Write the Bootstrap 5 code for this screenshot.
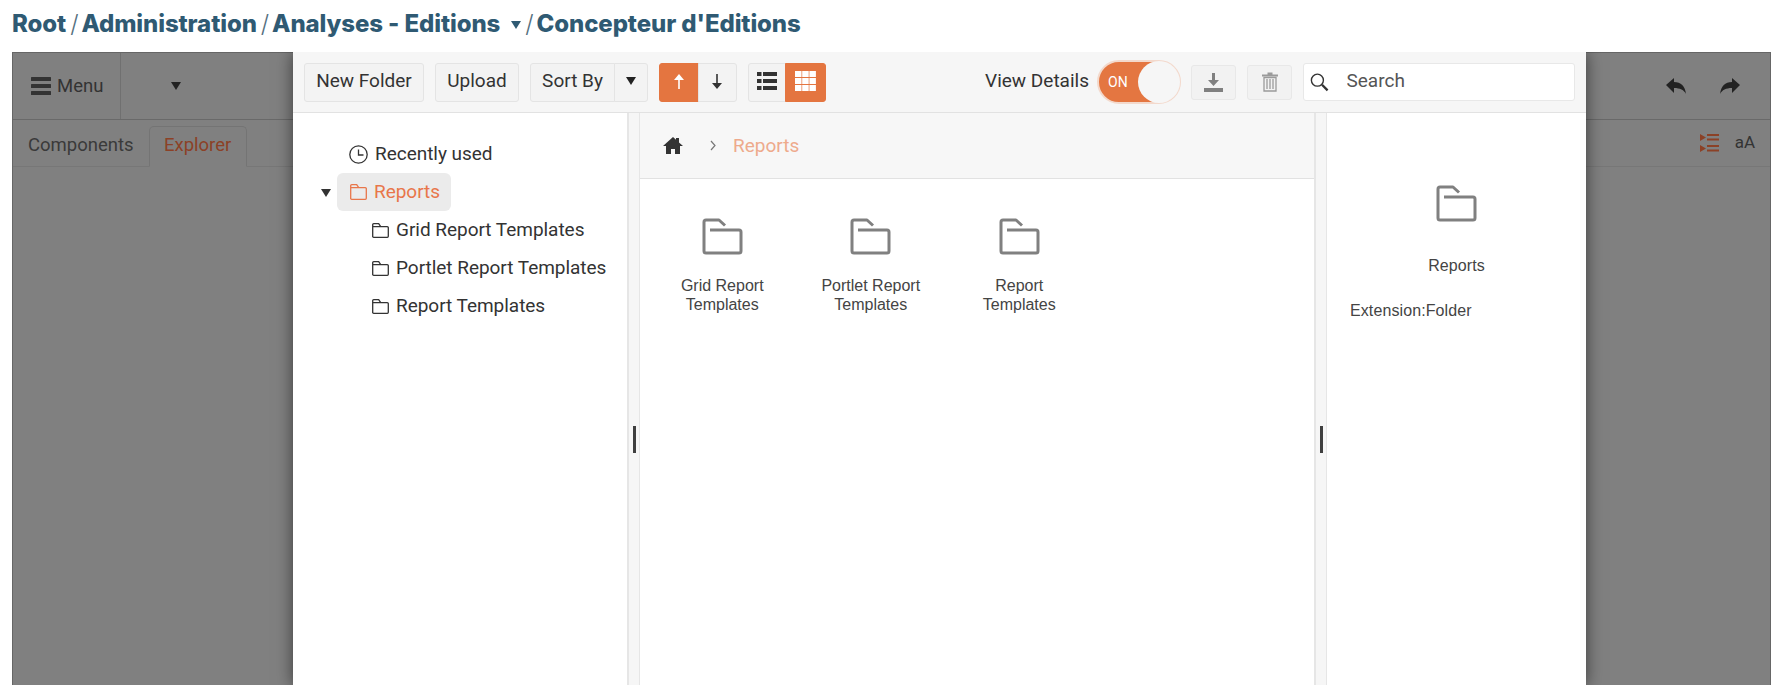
<!DOCTYPE html>
<html lang="en">
<head>
<meta charset="utf-8">
<title>Concepteur d'Editions</title>
<link href="https://cdn.jsdelivr.net/npm/bootstrap@5.3.0/dist/css/bootstrap.min.css" rel="stylesheet">
<style>
html,body{height:685px;overflow:hidden;background:#fff}
body{font-family:Roboto,"Liberation Sans",sans-serif;color:#333}
.crumbs{height:52px;padding:0 0 4px 12px;font-family:Inter,"Liberation Sans",sans-serif;font-weight:800;font-size:24px;color:#2f5a73;letter-spacing:-.1px}
.crumbs .sep{font-weight:300;color:#55707f;margin:0 3px 0 4px}
.crumbs .tri{width:0;height:0;border-left:5px solid transparent;border-right:5px solid transparent;border-top:8px solid #2f5a73;margin:2px 0 0 11px}
.stage{position:relative;height:633px;margin:0 14px 0 12px;background:#808080;border:1px solid #666;border-bottom:0}
.bar-top{height:67px;border-bottom:1px solid #696969}
.menu-cell{width:108px;height:100%;border-right:1px solid #707070;padding-left:18px;font-size:18.5px;color:#333;gap:6px}
.menu-cell .mlabel{padding-top:1px}
.drop-cell{width:110px}
.tri-d{width:0;height:0;border-left:5px solid transparent;border-right:5px solid transparent;border-top:8px solid #222}
.undo-set{gap:34px;margin-right:30px}
.bar-tabs{height:47px;border-bottom:1px solid #777;padding-left:15px}
.tab-a{font-size:18.5px;color:#3a3a3a;padding:0 15px 0 0;height:40px}
.tab-b{font-size:18.5px;color:#8c4126;width:98px;height:41px;margin-bottom:-1px;border:1px solid #747474;border-bottom-color:#808080;border-radius:5px 5px 0 0;background:#808080;padding-bottom:2px}
.tab-tools{margin-left:auto;gap:16px;margin-right:15px;color:#333;font-size:17px}
.dlg{position:absolute;left:280px;top:-1px;width:1293px;height:634px;background:#fff;box-shadow:0 0 16px rgba(0,0,0,.55);clip-path:inset(0 -30px -30px -30px)}
.dlg-bar{height:61px;background:#f6f6f6;border-bottom:1px solid #e2e2e2;padding:0 11px}
.tbtn{--bs-btn-font-size:19px;--bs-btn-color:#333;--bs-btn-bg:#f3f3f3;--bs-btn-border-color:#e4e4e4;--bs-btn-hover-bg:#f3f3f3;--bs-btn-hover-color:#333;--bs-btn-hover-border-color:#e4e4e4;--bs-btn-border-radius:3px;--bs-btn-padding-y:0;--bs-btn-padding-x:0;height:39px;display:inline-flex;align-items:center;justify-content:center;font-family:Roboto,"Liberation Sans",sans-serif;padding-bottom:2px}
.w-new{width:120px}.w-up{width:84px;margin-left:11px}.w-sort{width:85px}.w-caret{width:34px}
.g-sort{margin-left:11px}.g-dir{margin-left:11px}.g-view{margin-left:11px}
.w-half{width:39.500px}.w-view{width:38px}.w-half2{width:41px}
.tbtn.on{--bs-btn-bg:#e47540;--bs-btn-border-color:#e47540;--bs-btn-hover-bg:#e47540;--bs-btn-hover-border-color:#e47540}
.dlg-right{margin-left:auto;margin-right:0}
.vd-label{font-size:19px;color:#333;margin-right:8px;padding-bottom:2px}
.toggler{width:84px;height:44px;border-radius:22px;border:2px solid #f3d9cc;background:#e47641;color:#fff;font-size:14px;font-weight:400;padding-left:9px}
.toggler .knob{width:42px;height:42px;border-radius:50%;background:#f6f6f6;margin-left:auto;margin-right:-1px}
.icbtn{width:45px;height:35px;--bs-btn-bg:#f2f2f2;--bs-btn-border-color:#e8e8e8;--bs-btn-hover-bg:#f2f2f2;--bs-btn-hover-border-color:#e8e8e8;padding-bottom:0}
.m-a{margin-left:10px}.m-b{margin-left:11px}
.searchbox{width:272px;height:38px;margin-left:11px;background:#fff;border:1px solid #e8e8e8;border-radius:3px;padding-left:6px}
.searchbox .form-control{border:0;background:transparent;box-shadow:none;padding:0 0 3px 18px;font-size:19px;color:#555;height:100%;font-family:Roboto,"Liberation Sans",sans-serif}
.searchbox .form-control::placeholder{color:#555;opacity:1}
.panes{height:572px}
.tree-pane{width:334px;padding-top:22px;font-size:19px;color:#333;letter-spacing:-.03px}
.trow{height:38px;padding-left:56px;gap:7px}
.trow.sub{padding-left:79px;gap:7px}
.trow.sel{padding-left:28px;gap:0}
.trow .twist{width:0;height:0;border-left:5px solid transparent;border-right:5px solid transparent;border-top:8px solid #333;margin-top:2px;margin-right:6px}
.sel-pill{width:114px;height:38px;border-radius:6px;background:#ebebeb;color:#e8764a;padding-left:13px;gap:7px}
.gut{width:13px;background:#f6f6f6;border-left:2px solid #e6e6e6;border-right:1px solid #e6e6e6}
.gut .grip{width:3px;height:27px;background:#3f3f3f;margin-top:313px}
.mid-pane{width:674px}
.mid-crumb{height:66px;background:#f7f7f7;border-bottom:1px solid #e2e2e2;padding-left:23px;font-size:19px}
.mid-crumb .chev{color:#777;margin:0 17px 0 27px;width:6px}
.mid-crumb .cur{color:#eeaa8c;padding-top:1px}
.files{padding-top:39px;padding-left:8px}
.fitem{width:148.5px;font-family:"Liberation Sans",Arial,sans-serif;font-size:16px;line-height:18.5px;color:#444;text-align:center;padding:0 30px}
.fitem svg{display:block;margin:0 auto 22px}
.fitem.w2{padding:0 20px}
.info-pane{width:257px;font-family:"Liberation Sans",Arial,sans-serif;font-size:16px;color:#444;letter-spacing:.1px}
.info-top{padding:72px 0 0 2px}
.info-top svg{display:block;margin:0 auto 34px}
.info-name{text-align:center;line-height:19px}
.info-ext{padding:26px 0 0 23px;line-height:19px}
</style>
</head>
<body>
<header class="crumbs d-flex align-items-center">
  <span>Root</span><span class="sep">/</span><span>Administration</span><span class="sep">/</span><span>Analyses - Editions</span><span class="tri"></span><span class="sep">/</span><span>Concepteur d'Editions</span>
</header>
<main class="stage">
  <div class="bar-top d-flex align-items-center">
    <div class="menu-cell d-flex align-items-center">
      <svg width="20" height="18" viewBox="0 0 20 18" fill="#333"><rect width="20" height="4" rx=".5"/><rect y="7" width="20" height="4" rx=".5"/><rect y="14" width="20" height="4" rx=".5"/></svg>
      <span class="mlabel">Menu</span>
    </div>
    <div class="drop-cell d-flex justify-content-center"><span class="tri-d"></span></div>
    <div class="undo-set ms-auto d-flex align-items-center">
      <svg width="20" height="16" viewBox="0 0 20 16" fill="#222"><path d="M0 7 8 0v4c7 0 11 4 12 12-2-4-6-6-12-6v5z"/></svg>
      <svg width="20" height="16" viewBox="0 0 20 16" fill="#222"><path d="M20 7 12 0v4C5 4 1 8 0 16c2-4 6-6 12-6v5z"/></svg>
    </div>
  </div>
  <div class="bar-tabs d-flex align-items-end">
    <div class="tab-a d-flex align-items-center">Components</div>
    <div class="tab-b d-flex align-items-center justify-content-center">Explorer</div>
    <div class="tab-tools d-flex align-items-center align-self-center">
      <svg width="19" height="18" viewBox="0 0 19 18" fill="#8c4126"><path d="M0 0l6 3.500L0 7zM0 11l6 3.500L0 18z"/><rect x="7" y="0" width="12" height="2"/><rect x="7" y="4.500" width="12" height="2"/><rect x="7" y="11" width="12" height="2"/><rect x="7" y="15.500" width="12" height="2"/></svg>
      <span>aA</span>
    </div>
  </div>

  <section class="dlg d-flex flex-column">
    <div class="dlg-bar d-flex align-items-center">
      <button class="btn tbtn w-new" type="button">New Folder</button>
      <button class="btn tbtn w-up" type="button">Upload</button>
      <div class="btn-group g-sort">
        <button class="btn tbtn w-sort" type="button">Sort By</button>
        <button class="btn tbtn w-caret" type="button"><span class="tri-d"></span></button>
      </div>
      <div class="btn-group g-dir">
        <button class="btn tbtn on w-half" type="button" aria-label="Ascending">
          <svg width="10" height="15" viewBox="0 0 10 15" fill="#fff"><path d="M5 0l5 6H5.800v9H4.200V6H0z"/></svg>
        </button>
        <button class="btn tbtn w-half" type="button" aria-label="Descending">
          <svg width="10" height="15" viewBox="0 0 10 15" fill="#333"><path d="M5 15l5-6H5.800V0H4.200v9H0z"/></svg>
        </button>
      </div>
      <div class="btn-group g-view">
        <button class="btn tbtn w-view" type="button" aria-label="List">
          <svg width="20" height="18" viewBox="0 0 20 18" fill="#333"><rect width="4.500" height="4"/><rect x="6" width="14" height="4"/><rect y="7" width="4.500" height="4"/><rect x="6" y="7" width="14" height="4"/><rect y="14" width="4.500" height="4"/><rect x="6" y="14" width="14" height="4"/></svg>
        </button>
        <button class="btn tbtn on w-half2" type="button" aria-label="Grid">
          <svg width="21" height="20" viewBox="0 0 21 20" fill="#fff"><rect width="6.500" height="6"/><rect x="7.200" width="6.500" height="6"/><rect x="14.400" width="6.500" height="6"/><rect y="7" width="6.500" height="6"/><rect x="7.200" y="7" width="6.500" height="6"/><rect x="14.400" y="7" width="6.500" height="6"/><rect y="14" width="6.500" height="6"/><rect x="7.200" y="14" width="6.500" height="6"/><rect x="14.400" y="14" width="6.500" height="6"/></svg>
        </button>
      </div>
      <div class="dlg-right d-flex align-items-center">
        <span class="vd-label">View Details</span>
        <div class="toggler d-flex align-items-center"><span>ON</span><span class="knob"></span></div>
        <button class="btn tbtn icbtn m-a" type="button" aria-label="Download">
          <svg width="19" height="19" viewBox="0 0 19 19" fill="#808080"><path d="M8 0h3v7h4l-5.500 6L4 7h4z"/><rect y="15" width="19" height="4"/></svg>
        </button>
        <button class="btn tbtn icbtn m-b" type="button" aria-label="Delete">
          <svg width="16" height="20" viewBox="0 0 16 20" fill="none" stroke="#9a9a9a"><path d="M5.500 1.500h5M0 3.500h16" stroke-width="2"/><path d="M2 5.500h12V19H2zM5 7v10M8 7v10M11 7v10" stroke-width="1.300"/></svg>
        </button>
        <div class="searchbox d-flex align-items-center">
          <svg width="20" height="20" viewBox="0 0 20 20" fill="none" stroke="#333"><circle cx="8" cy="8" r="6.500" stroke-width="1.500"/><path d="M13 13l6 6" stroke-width="2.500"/></svg>
          <input class="form-control" type="text" placeholder="Search" aria-label="Search">
        </div>
      </div>
    </div>
    <div class="panes d-flex">
      <div class="tree-pane">
        <div class="trow d-flex align-items-center">
          <svg width="19" height="19" viewBox="0 0 19 19" fill="none" stroke="#333" stroke-width="1.300"><circle cx="9.500" cy="9.500" r="8.700"/><path d="M9.500 4.500v5.500h5"/></svg>
          <span>Recently used</span>
        </div>
        <div class="trow sel d-flex align-items-center">
          <span class="twist"></span>
          <div class="sel-pill d-flex align-items-center">
            <svg width="17" height="16" viewBox="0 0 17 16" fill="none" stroke="#e8764a" stroke-width="1.300"><path d="M.7 15V1.700a1 1 0 0 1 1-1h5l2 3h6.600a1 1 0 0 1 1 1V14.300a1 1 0 0 1-1 1H1.700a1 1 0 0 1-1-1zM.7 3.700h8.300"/></svg>
            <span>Reports</span>
          </div>
        </div>
        <div class="trow sub d-flex align-items-center">
          <svg width="17" height="15" viewBox="0 0 17 15" fill="none" stroke="#333" stroke-width="1.300"><path d="M.7 14V1.700a1 1 0 0 1 1-1h5l2 3h6.600a1 1 0 0 1 1 1V13.300a1 1 0 0 1-1 1H1.700a1 1 0 0 1-1-1zM.7 3.700h8.300"/></svg>
          <span>Grid Report Templates</span>
        </div>
        <div class="trow sub d-flex align-items-center">
          <svg width="17" height="15" viewBox="0 0 17 15" fill="none" stroke="#333" stroke-width="1.300"><path d="M.7 14V1.700a1 1 0 0 1 1-1h5l2 3h6.600a1 1 0 0 1 1 1V13.300a1 1 0 0 1-1 1H1.700a1 1 0 0 1-1-1zM.7 3.700h8.300"/></svg>
          <span>Portlet Report Templates</span>
        </div>
        <div class="trow sub d-flex align-items-center">
          <svg width="17" height="15" viewBox="0 0 17 15" fill="none" stroke="#333" stroke-width="1.300"><path d="M.7 14V1.700a1 1 0 0 1 1-1h5l2 3h6.600a1 1 0 0 1 1 1V13.300a1 1 0 0 1-1 1H1.700a1 1 0 0 1-1-1zM.7 3.700h8.300"/></svg>
          <span>Report Templates</span>
        </div>
      </div>
      <div class="gut d-flex justify-content-center"><span class="grip"></span></div>
      <div class="mid-pane">
        <div class="mid-crumb d-flex align-items-center">
          <svg width="20" height="17" viewBox="0 0 20 17" fill="#333"><path d="M10 0 0 9h3v8h5v-5h4v5h5V9h3l-4-3.600V1h-3v1.700z"/></svg>
          <svg class="chev" width="6" height="11" viewBox="0 0 6 11" fill="none" stroke="#777" stroke-width="1.200"><path d="M1 1l4 4.500L1 10"/></svg>
          <span class="cur">Reports</span>
        </div>
        <div class="files d-flex">
          <div class="fitem">
            <svg width="41" height="37" viewBox="0 0 41 37" fill="none" stroke="#808080" stroke-width="3" stroke-linejoin="round"><path d="M2 33V4a2 2 0 0 1 2-2h13l6 5.500M8 12h29a2 2 0 0 1 2 2v19a2 2 0 0 1-2 2H4a2 2 0 0 1-2-2"/></svg>
            Grid Report Templates
          </div>
          <div class="fitem w2">
            <svg width="41" height="37" viewBox="0 0 41 37" fill="none" stroke="#808080" stroke-width="3" stroke-linejoin="round"><path d="M2 33V4a2 2 0 0 1 2-2h13l6 5.500M8 12h29a2 2 0 0 1 2 2v19a2 2 0 0 1-2 2H4a2 2 0 0 1-2-2"/></svg>
            Portlet Report Templates
          </div>
          <div class="fitem">
            <svg width="41" height="37" viewBox="0 0 41 37" fill="none" stroke="#808080" stroke-width="3" stroke-linejoin="round"><path d="M2 33V4a2 2 0 0 1 2-2h13l6 5.500M8 12h29a2 2 0 0 1 2 2v19a2 2 0 0 1-2 2H4a2 2 0 0 1-2-2"/></svg>
            Report Templates
          </div>
        </div>
      </div>
      <div class="gut d-flex justify-content-center"><span class="grip"></span></div>
      <div class="info-pane">
        <div class="info-top">
          <svg width="41" height="37" viewBox="0 0 41 37" fill="none" stroke="#808080" stroke-width="3" stroke-linejoin="round"><path d="M2 33V4a2 2 0 0 1 2-2h13l6 5.500M8 12h29a2 2 0 0 1 2 2v19a2 2 0 0 1-2 2H4a2 2 0 0 1-2-2"/></svg>
          <div class="info-name">Reports</div>
        </div>
        <div class="info-ext">Extension:Folder</div>
      </div>
    </div>
  </section>
</main>
<script src="https://cdn.jsdelivr.net/npm/bootstrap@5.3.0/dist/js/bootstrap.bundle.min.js"></script>
</body>
</html>
